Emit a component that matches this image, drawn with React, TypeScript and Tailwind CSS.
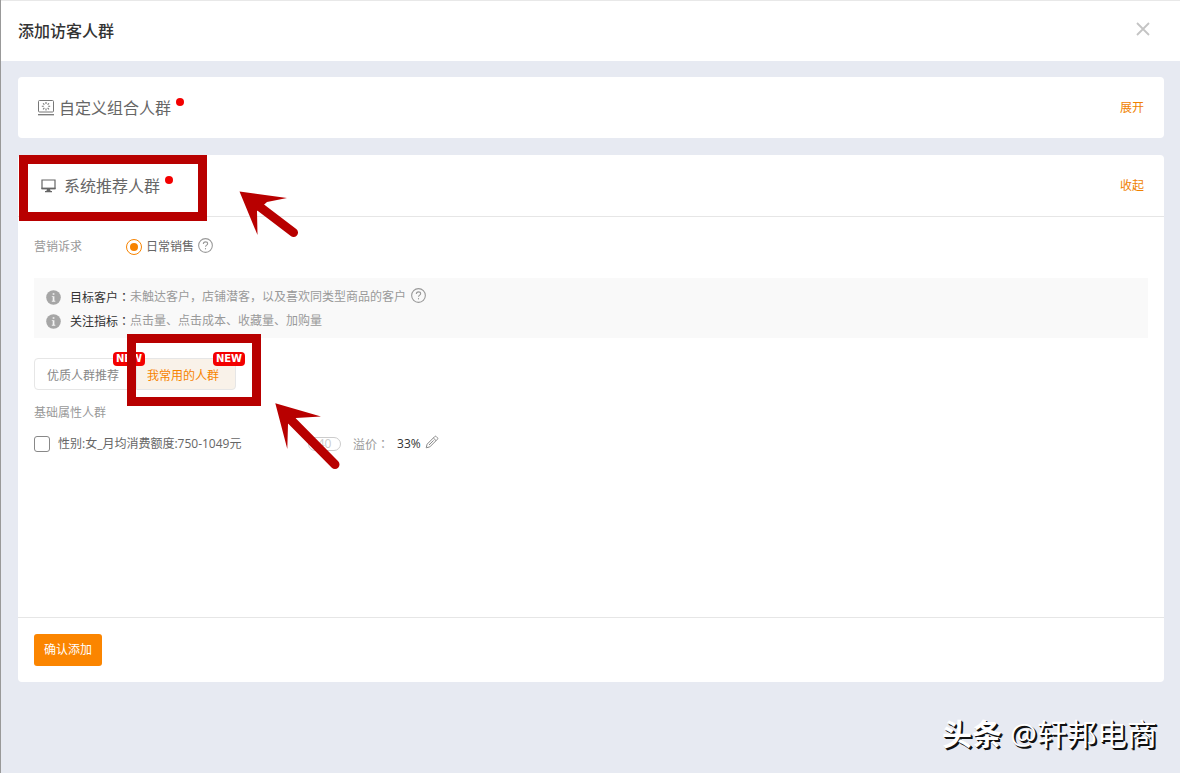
import { ReactNode } from "react";
import { clsx } from "clsx";

const tips = [
  {
    label: "目标客户：",
    text: "未触达客户，店铺潜客，以及喜欢同类型商品的客户",
    help: true,
  },
  { label: "关注指标：", text: "点击量、点击成本、收藏量、加购量", help: false },
];

const tabs = [
  { name: "优质人群推荐", active: false },
  { name: "我常用的人群", active: true },
];

// the full-width colon sits in the middle of its cell
const Label = ({ children }: { children: string }) => (
  <>
    {children.replace("：", "")}
    <span lang="zh-TW" className="font-['Noto_Sans_CJK_TC',sans-serif]">
      ：
    </span>
  </>
);

const HelpIcon = () => (
  <svg width="15" height="15" viewBox="0 0 14 14" fill="none" stroke="#999">
    <circle cx="7" cy="7" r="6.4" />
    <path d="M5 5.6C5 4.3 5.8 3.6 7 3.6s2 .7 2 1.7c0 1.3-2 1.4-2 2.9" />
    <path d="M7 9.4v1.2" />
  </svg>
);

const InfoIcon = () => (
  <svg width="15" height="15" viewBox="0 0 15 15">
    <circle cx="7.5" cy="7.5" r="7.3" fill="#a6a6a6" />
    <path d="M6.7 3.2h1.7v1.5H6.7zM5.8 6.2h2.6v4.6h.9v.9H5.8v-.9h.9V7.1h-.9z" fill="#f3f3f3" />
  </svg>
);

const CustomIcon = () => (
  <svg width="18" height="18" viewBox="0 0 18 18" fill="none" stroke="#777">
    <rect x="1.5" y="1.5" width="15" height="11.5" rx="1" />
    <path d="M1 15.7h16" strokeWidth="1.3" />
    <path
      d="M9 3v2M9 9.5v2M4.8 7.3h2M11.2 7.3h2M6 4.3l1.4 1.4M10.6 8.9l1.4 1.4M12 4.3l-1.4 1.4M7.4 8.9L6 10.3"
      strokeWidth="1.1"
    />
  </svg>
);

const MonitorIcon = () => (
  <svg width="15" height="14" viewBox="0 0 15 14" fill="none" stroke="#666">
    <path d="M1 1h13v8.5H1z" strokeWidth="1.2" />
    <path d="M.5 9.5h14" strokeWidth="1.8" />
    <path d="M6 10h3l.6 2h1.4v1.2H4V12h1.4z" fill="#666" stroke="none" />
  </svg>
);

const PencilIcon = () => (
  <svg width="14" height="14" viewBox="0 0 14 14" fill="none" stroke="#888">
    <path d="M1.2 12.8l.9-3.6 7.6-7.6c.5-.5 1.1-.5 1.6 0l1.1 1.1c.5.5.5 1.1 0 1.6l-7.6 7.6z" />
    <path d="M8.4 3l2.6 2.6M4 10l4.6-4.6" />
  </svg>
);

const Dot = () => <span className="mb-3 size-2 rounded-full bg-[#f30000]" />;

const Outline = ({ className }: { className: string }) => (
  <div
    className={clsx(
      "pointer-events-none absolute z-20 border-[9px] border-[#b80000]",
      className
    )}
  />
);

const CardTitle = ({ icon, title }: { icon: ReactNode; title: string }) => (
  <h2 className="flex items-center text-base text-[#666]">
    {icon}
    <span className="mr-[5px]">{title}</span>
    <Dot />
  </h2>
);

const App = () => {
  return (
    <div className="flex min-h-screen flex-col border-l border-[#999] bg-[#e7eaf2] font-['Open_Sans','Noto_Sans_CJK_SC',sans-serif] text-xs text-[#666]">
      <header className="flex h-[61px] items-center justify-between border-t border-[#e8e8e8] bg-white pr-[30px] pl-[17px]">
        <h1 className="text-base font-medium text-[#333]">添加访客人群</h1>
        <button type="button" aria-label="关闭" className="mb-1">
          <svg width="14" height="14" viewBox="0 0 14 14" stroke="#c4c4c4" strokeWidth="1.8">
            <path d="M1 1l12 12M13 1L1 13" />
          </svg>
        </button>
      </header>

      <main className="flex flex-col gap-[17px] pt-4 pr-4 pl-[17px]">
        <section className="flex h-[61px] items-center justify-between rounded bg-white pr-5 pl-[19px]">
          <CardTitle
            icon={
              <span className="mr-1">
                <CustomIcon />
              </span>
            }
            title="自定义组合人群"
          />
          <button type="button" className="text-[#f08200]">
            展开
          </button>
        </section>

        <section className="relative rounded bg-white">
          <div className="flex h-[62px] items-center justify-between border-b border-[#e6e6e6] pr-5 pl-[23px]">
            <CardTitle
              icon={
                <span className="mr-2">
                  <MonitorIcon />
                </span>
              }
              title="系统推荐人群"
            />
            <button type="button" className="text-[#f08200]">
              收起
            </button>
          </div>

          <div className="flex min-h-[400px] flex-col px-4 pt-5">
            <div className="flex h-5 items-center">
              <span className="w-[92px] text-[#999]">营销诉求</span>
              <label className="flex items-center gap-1">
                <input
                  type="radio"
                  name="goal"
                  defaultChecked
                  className="size-4 appearance-none rounded-full border border-[#f78300] bg-[#f78300] bg-clip-content p-[3px]"
                />
                日常销售
              </label>
              <button type="button" aria-label="帮助" className="mb-1 ml-1">
                <HelpIcon />
              </button>
            </div>

            <div className="mt-[21px] flex h-[60px] flex-col justify-center bg-[#f9f9f9] px-3 pt-0.5">
              {tips.map((tip) => (
                <p key={tip.label} className="flex h-6 items-center">
                  <InfoIcon />
                  <span className="ml-[9px] text-[#333]">
                    <Label>{tip.label}</Label>
                  </span>
                  <span className="text-[#999]">{tip.text}</span>
                  {tip.help && (
                    <button type="button" aria-label="帮助" className="mb-1 ml-[5px]">
                      <HelpIcon />
                    </button>
                  )}
                </p>
              ))}
            </div>

            <div className="mt-5 flex">
              {tabs.map((tab) => (
                <button
                  key={tab.name}
                  type="button"
                  className={clsx(
                    "relative h-8 border border-[#e6e6e6] pt-1 text-left",
                    tab.active
                      ? "w-[100px] rounded-r bg-[#f9f2e9] pl-[10px] text-[#f78300]"
                      : "w-[102px] rounded-l pl-3 text-[#888]"
                  )}
                >
                  {tab.name}
                  <span className="absolute -top-[7px] -right-[10px] z-10 h-[14px] w-8 rounded-sm bg-[#f30000] text-center font-['DejaVu_Sans',sans-serif] text-[10px] leading-[14px] font-bold text-white">
                    NEW
                  </span>
                </button>
              ))}
            </div>

            <h3 className="mt-[13px] h-5 leading-5 text-[#999]">基础属性人群</h3>

            <div className="mt-[11px] flex h-5 items-center">
              <label className="flex w-[274px] items-center gap-2">
                <input
                  type="checkbox"
                  className="size-4 appearance-none rounded-[3px] border border-[#888] bg-white"
                />
                性别:女_月均消费额度:750-1049元
              </label>
              <button
                type="button"
                className="h-[14px] w-[33px] rounded-full border border-[#ccc] text-center leading-3 text-[#ccc]"
              >
                40
              </button>
              <span className="ml-3 text-[#999]">
                <Label>溢价：</Label>
              </span>
              <span className="ml-2 text-[#333]">33%</span>
              <button type="button" aria-label="编辑" className="mb-1 ml-1">
                <PencilIcon />
              </button>
            </div>
          </div>

          <div className="border-t border-[#e6e6e6] p-4">
            <button
              type="button"
              className="h-8 w-[68px] rounded-[3px] bg-[#fb8500] text-white"
            >
              确认添加
            </button>
          </div>

          <Outline className="top-0 left-px h-[66px] w-[188px]" />
          <Outline className="top-[179px] left-[109px] h-[72px] w-[134px]" />
          <svg
            className="pointer-events-none absolute top-[36px] left-[220px]"
            width="62"
            height="48"
            fill="#b80000"
          >
            <path d="M1.5 .5L49 7L29 11L19 20L19.5 44Z" />
            <path d="M22 16L55.5 41.5" stroke="#b80000" strokeWidth="9" strokeLinecap="round" />
          </svg>
          <svg
            className="pointer-events-none absolute top-[247px] left-[256px]"
            width="68"
            height="68"
            fill="#b80000"
          >
            <path d="M1.3 1.3L47 14.5L22 16L14 22L13.3 47Z" />
            <path d="M18 19L61 62.5" stroke="#b80000" strokeWidth="9" strokeLinecap="round" />
          </svg>
        </section>
      </main>

      <footer className="flex justify-end gap-2 pt-[29px] pr-[23px] pb-[17px] text-[30px] leading-[45px] text-white [text-shadow:1px_1px_0_#111,2px_2px_0_#111]">
        <span className="font-bold">头条</span>
        <span>@轩邦电商</span>
      </footer>
    </div>
  );
};

export default App;
